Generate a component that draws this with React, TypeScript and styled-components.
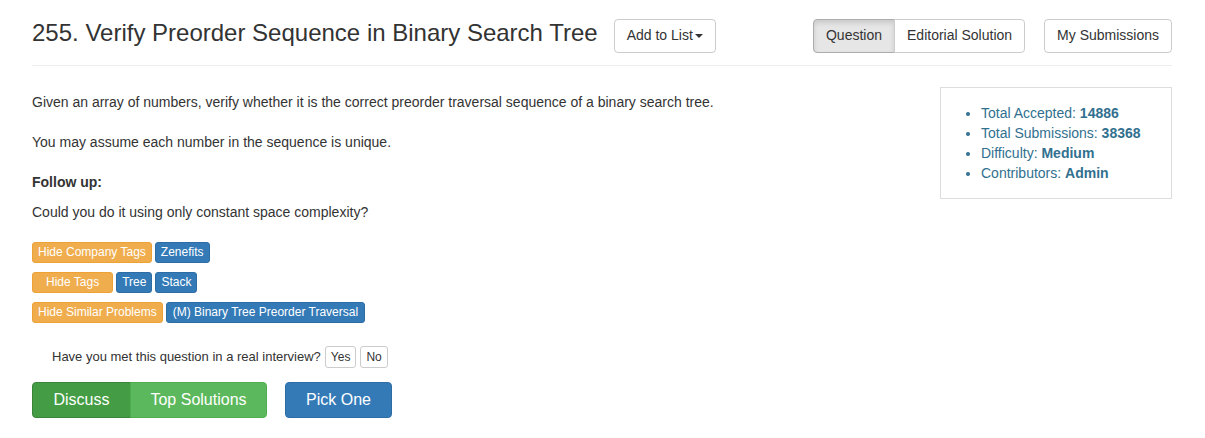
import React from "react";
import styled, { createGlobalStyle, css } from "styled-components";

const Global = createGlobalStyle`
  html, body { margin: 0; padding: 0; background: #fff; }
  body {
    font-family: "Liberation Sans", Arial, sans-serif;
    font-size: 14px;
    line-height: 1.42857;
    color: #333;
  }
  * { box-sizing: border-box; }
`;

const Container = styled.div`
  width: 1171px;
  margin: 0 auto;
  padding: 0 16px 0 15px;
`;

const Header = styled.div`
  display: flex;
  align-items: center;
  padding: 19px 0 12px;
  border-bottom: 1px solid #eee;
`;

const Title = styled.h3`
  margin: 0 16px 0 0;
  font-family: "Liberation Sans", Arial, sans-serif;
  font-size: 24px;
  font-weight: 400;
  line-height: 1.1;
  color: #333;
  position: relative;
  top: -3px;
`;

const Spacer = styled.div`
  flex: 1;
`;

const Btn = styled.button<{ $active?: boolean }>`
  font-family: "Liberation Sans", Arial, sans-serif;
  font-size: 14px;
  line-height: 1.42857;
  color: #333;
  background: ${(p) => (p.$active ? "#e6e6e6" : "#fff")};
  border: 1px solid ${(p) => (p.$active ? "#adadad" : "#ccc")};
  border-radius: 4px;
  padding: 6px 12px;
  height: 34px;
  display: inline-flex;
  align-items: center;
  ${(p) =>
    p.$active &&
    css`
      box-shadow: inset 0 3px 5px rgba(0, 0, 0, 0.125);
    `}
`;

const Caret = styled.span`
  display: inline-block;
  width: 0;
  height: 0;
  margin-left: 2px;
  border-top: 4px solid #333;
  border-left: 4px solid transparent;
  border-right: 4px solid transparent;
`;

const Group = styled.div`
  display: inline-flex;
  margin-right: 19px;
  & > button:first-child {
    border-top-right-radius: 0;
    border-bottom-right-radius: 0;
  }
  & > button:last-child {
    border-top-left-radius: 0;
    border-bottom-left-radius: 0;
    margin-left: -1px;
  }
`;

const Body = styled.div`
  display: flex;
  align-items: flex-start;
  padding-top: 21px;
`;

const Main = styled.div`
  flex: 1;
  padding-top: 5px;
`;

const Para = styled.p<{ $bold?: boolean }>`
  margin: 0 0 20px;
  font-size: 14px;
  line-height: 20px;
  font-weight: ${(p) => (p.$bold ? 700 : 400)};
  ${(p) =>
    p.$bold &&
    css`
      margin-bottom: 10px;
    `}
`;

const Stats = styled.div`
  width: 232px;
  border: 1px solid #ddd;
  padding: 15px 0 15px;
`;

const StatList = styled.ul`
  margin: 0;
  padding-left: 40px;
  color: #31708f;
  font-size: 14px;
  line-height: 20px;
  & b {
    font-weight: 700;
  }
`;

const TagRow = styled.div`
  display: flex;
  gap: 3px;
  margin-bottom: 9px;
`;

const Tag = styled.span<{ $kind: "warn" | "primary"; $pad?: number }>`
  display: inline-block;
  font-size: 12px;
  height: 21px;
  line-height: 19px;
  padding: 0 ${(p) => p.$pad ?? 5}px;
  color: #fff;
  border-radius: 3px;
  background: ${(p) => (p.$kind === "warn" ? "#f0ad4e" : "#337ab7")};
  border: 1px solid ${(p) => (p.$kind === "warn" ? "#eea236" : "#2e6da4")};
`;

const Interview = styled.div`
  display: flex;
  align-items: center;
  gap: 4px;
  padding-left: 20px;
  margin-top: 23px;
  font-size: 13px;
`;

const SmallBtn = styled.button`
  font-family: "Liberation Sans", Arial, sans-serif;
  font-size: 12px;
  height: 22px;
  padding: 0 5px;
  background: #fff;
  border: 1px solid #ccc;
  border-radius: 3px;
  color: #333;
`;

const Actions = styled.div`
  display: flex;
  margin-top: 14px;
  gap: 18px;
`;

const BigGroup = styled.div`
  display: flex;
`;

const BigBtn = styled.button<{ $variant: "successActive" | "success" | "primary"; $w: number; $pos?: "l" | "r" }>`
  font-family: "Liberation Sans", Arial, sans-serif;
  font-size: 16px;
  color: #fff;
  height: 36px;
  width: ${(p) => p.$w}px;
  border-radius: ${(p) => (p.$pos === "l" ? "4px 0 0 4px" : p.$pos === "r" ? "0 4px 4px 0" : "4px")};
  background: ${(p) =>
    p.$variant === "successActive" ? "#449d44" : p.$variant === "success" ? "#5cb85c" : "#337ab7"};
  border: 1px solid
    ${(p) =>
      p.$variant === "successActive" ? "#398439" : p.$variant === "success" ? "#4cae4c" : "#2e6da4"};
  ${(p) =>
    p.$pos === "r" &&
    css`
      margin-left: -1px;
    `}
`;

export default function App() {
  return (
    <>
      <Global />
      <Container>
        <Header>
          <Title>255. Verify Preorder Sequence in Binary Search Tree</Title>
          <Btn>
            Add to List
            <Caret />
          </Btn>
          <Spacer />
          <Group>
            <Btn $active>Question</Btn>
            <Btn>Editorial Solution</Btn>
          </Group>
          <Btn>My Submissions</Btn>
        </Header>
        <Body>
          <Main>
            <Para>
              Given an array of numbers, verify whether it is the correct preorder traversal sequence of a binary
              search tree.
            </Para>
            <Para>You may assume each number in the sequence is unique.</Para>
            <Para $bold>Follow up:</Para>
            <Para>Could you do it using only constant space complexity?</Para>
            <TagRow>
              <Tag $kind="warn">Hide Company Tags</Tag>
              <Tag $kind="primary">Zenefits</Tag>
            </TagRow>
            <TagRow>
              <Tag $kind="warn" $pad={13}>
                Hide Tags
              </Tag>
              <Tag $kind="primary">Tree</Tag>
              <Tag $kind="primary">Stack</Tag>
            </TagRow>
            <TagRow>
              <Tag $kind="warn">Hide Similar Problems</Tag>
              <Tag $kind="primary" $pad={6}>
                (M) Binary Tree Preorder Traversal
              </Tag>
            </TagRow>
            <Interview>
              Have you met this question in a real interview?
              <SmallBtn>Yes</SmallBtn>
              <SmallBtn>No</SmallBtn>
            </Interview>
            <Actions>
              <BigGroup>
                <BigBtn $variant="successActive" $w={99} $pos="l">
                  Discuss
                </BigBtn>
                <BigBtn $variant="success" $w={137} $pos="r">
                  Top Solutions
                </BigBtn>
              </BigGroup>
              <BigBtn $variant="primary" $w={107}>
                Pick One
              </BigBtn>
            </Actions>
          </Main>
          <Stats>
            <StatList>
              <li>
                Total Accepted: <b>14886</b>
              </li>
              <li>
                Total Submissions: <b>38368</b>
              </li>
              <li>
                Difficulty: <b>Medium</b>
              </li>
              <li>
                Contributors: <b>Admin</b>
              </li>
            </StatList>
          </Stats>
        </Body>
      </Container>
    </>
  );
}
